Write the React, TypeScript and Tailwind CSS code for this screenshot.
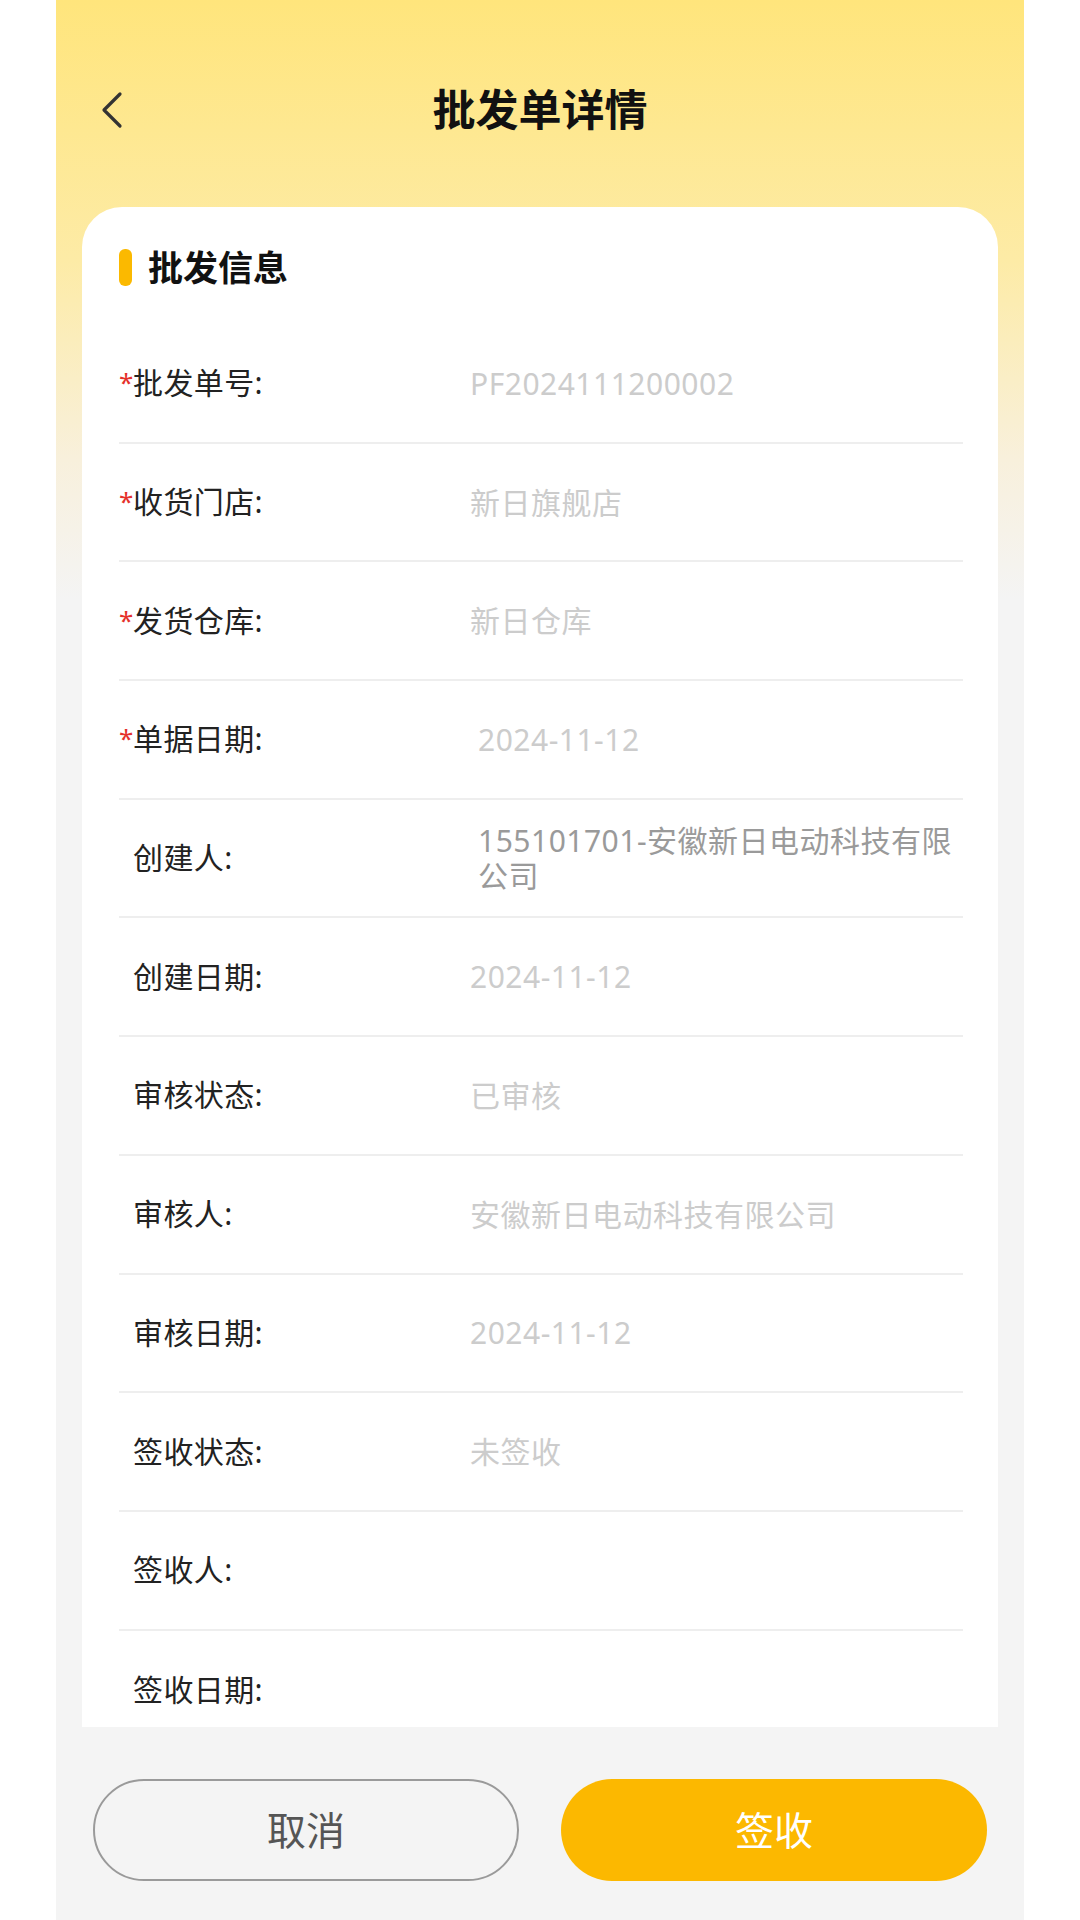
import React from "react";

type Row = {
  label: string;
  required?: boolean;
  value?: string;
  shift?: boolean;
  dark?: boolean;
};

const rows: Row[] = [
  { label: "批发单号:", required: true, value: "PF2024111200002" },
  { label: "收货门店:", required: true, value: "新日旗舰店" },
  { label: "发货仓库:", required: true, value: "新日仓库" },
  { label: "单据日期:", required: true, value: "2024-11-12", shift: true },
  { label: "创建人:", value: "155101701-安徽新日电动科技有限公司", shift: true, dark: true },
  { label: "创建日期:", value: "2024-11-12" },
  { label: "审核状态:", value: "已审核" },
  { label: "审核人:", value: "安徽新日电动科技有限公司" },
  { label: "审核日期:", value: "2024-11-12" },
  { label: "签收状态:", value: "未签收" },
  { label: "签收人:" },
  { label: "签收日期:" },
];

const font = { fontFamily: '"Noto Sans", "Noto Sans CJK SC", sans-serif' };

export default function App() {
  return (
    <div className="w-[1080px] h-[1920px] bg-white overflow-hidden" style={font}>
      <div className="ml-[56px] w-[968px] h-[1920px] flex flex-col bg-[linear-gradient(180deg,#FFE57C_0px,#FDEBA6_260px,#F8F0DC_460px,#F4F4F4_600px)]">
        {/* Header */}
        <div className="h-[207px] shrink-0 pt-[12px] grid grid-cols-[1fr_auto_1fr] items-center">
          <div className="pl-[45px] flex items-center">
            <svg width="22" height="38" viewBox="0 0 22 38" fill="none">
              <polyline points="19,3 3,19 19,35" stroke="#333333" strokeWidth="3.2" strokeLinecap="round" strokeLinejoin="round" />
            </svg>
          </div>
          <div className="text-[43px] font-bold text-[#111111] leading-none">批发单详情</div>
          <div />
        </div>

        {/* Card */}
        <div className="ml-[26px] w-[916px] h-[1520px] shrink-0 bg-white rounded-t-[40px] overflow-hidden pl-[37px] pr-[35px]">
          <div className="h-[118px] flex items-center pt-[3px]">
            <div className="w-[13px] h-[37px] rounded-[6px] bg-[#FBB900]" />
            <div className="ml-[16px] text-[35px] font-bold text-[#111111] leading-none">批发信息</div>
          </div>
          {rows.map((r, i) => (
            <div
              key={i}
              className={
                "h-[118.7px] flex items-center " +
                (i < rows.length - 1 ? "border-b-2 border-[#EEEEEE]" : "")
              }
            >
              <div className="w-[351px] shrink-0 flex items-start text-[30px] leading-[36px] text-[#222222] tracking-[0.4px]">
                <span className="w-[14px] shrink-0 text-[#E5302B] text-[26px] leading-[34px]">
                  {r.required ? "*" : ""}
                </span>
                <span>{r.label}</span>
              </div>
              {r.value && (
                <div
                  className={
                    "flex-1 text-[30px] leading-[35px] tracking-[0.5px] " +
                    (r.shift ? "pl-[8px] " : "") +
                    (r.dark ? "text-[#9A9A9A]" : "text-[#CCCCCC]")
                  }
                >
                  {r.value}
                </div>
              )}
            </div>
          ))}
        </div>

        {/* Buttons */}
        <div className="mt-[52px] px-[37px] flex gap-[42px]">
          <button className="w-[428px] h-[102px] rounded-full border-2 border-[#9A9A9A] bg-transparent text-[39px] text-[#555555] flex items-center justify-center">
            取消
          </button>
          <button className="w-[428px] h-[102px] rounded-full bg-[#FCB800] text-[39px] text-white flex items-center justify-center">
            签收
          </button>
        </div>
      </div>
    </div>
  );
}
